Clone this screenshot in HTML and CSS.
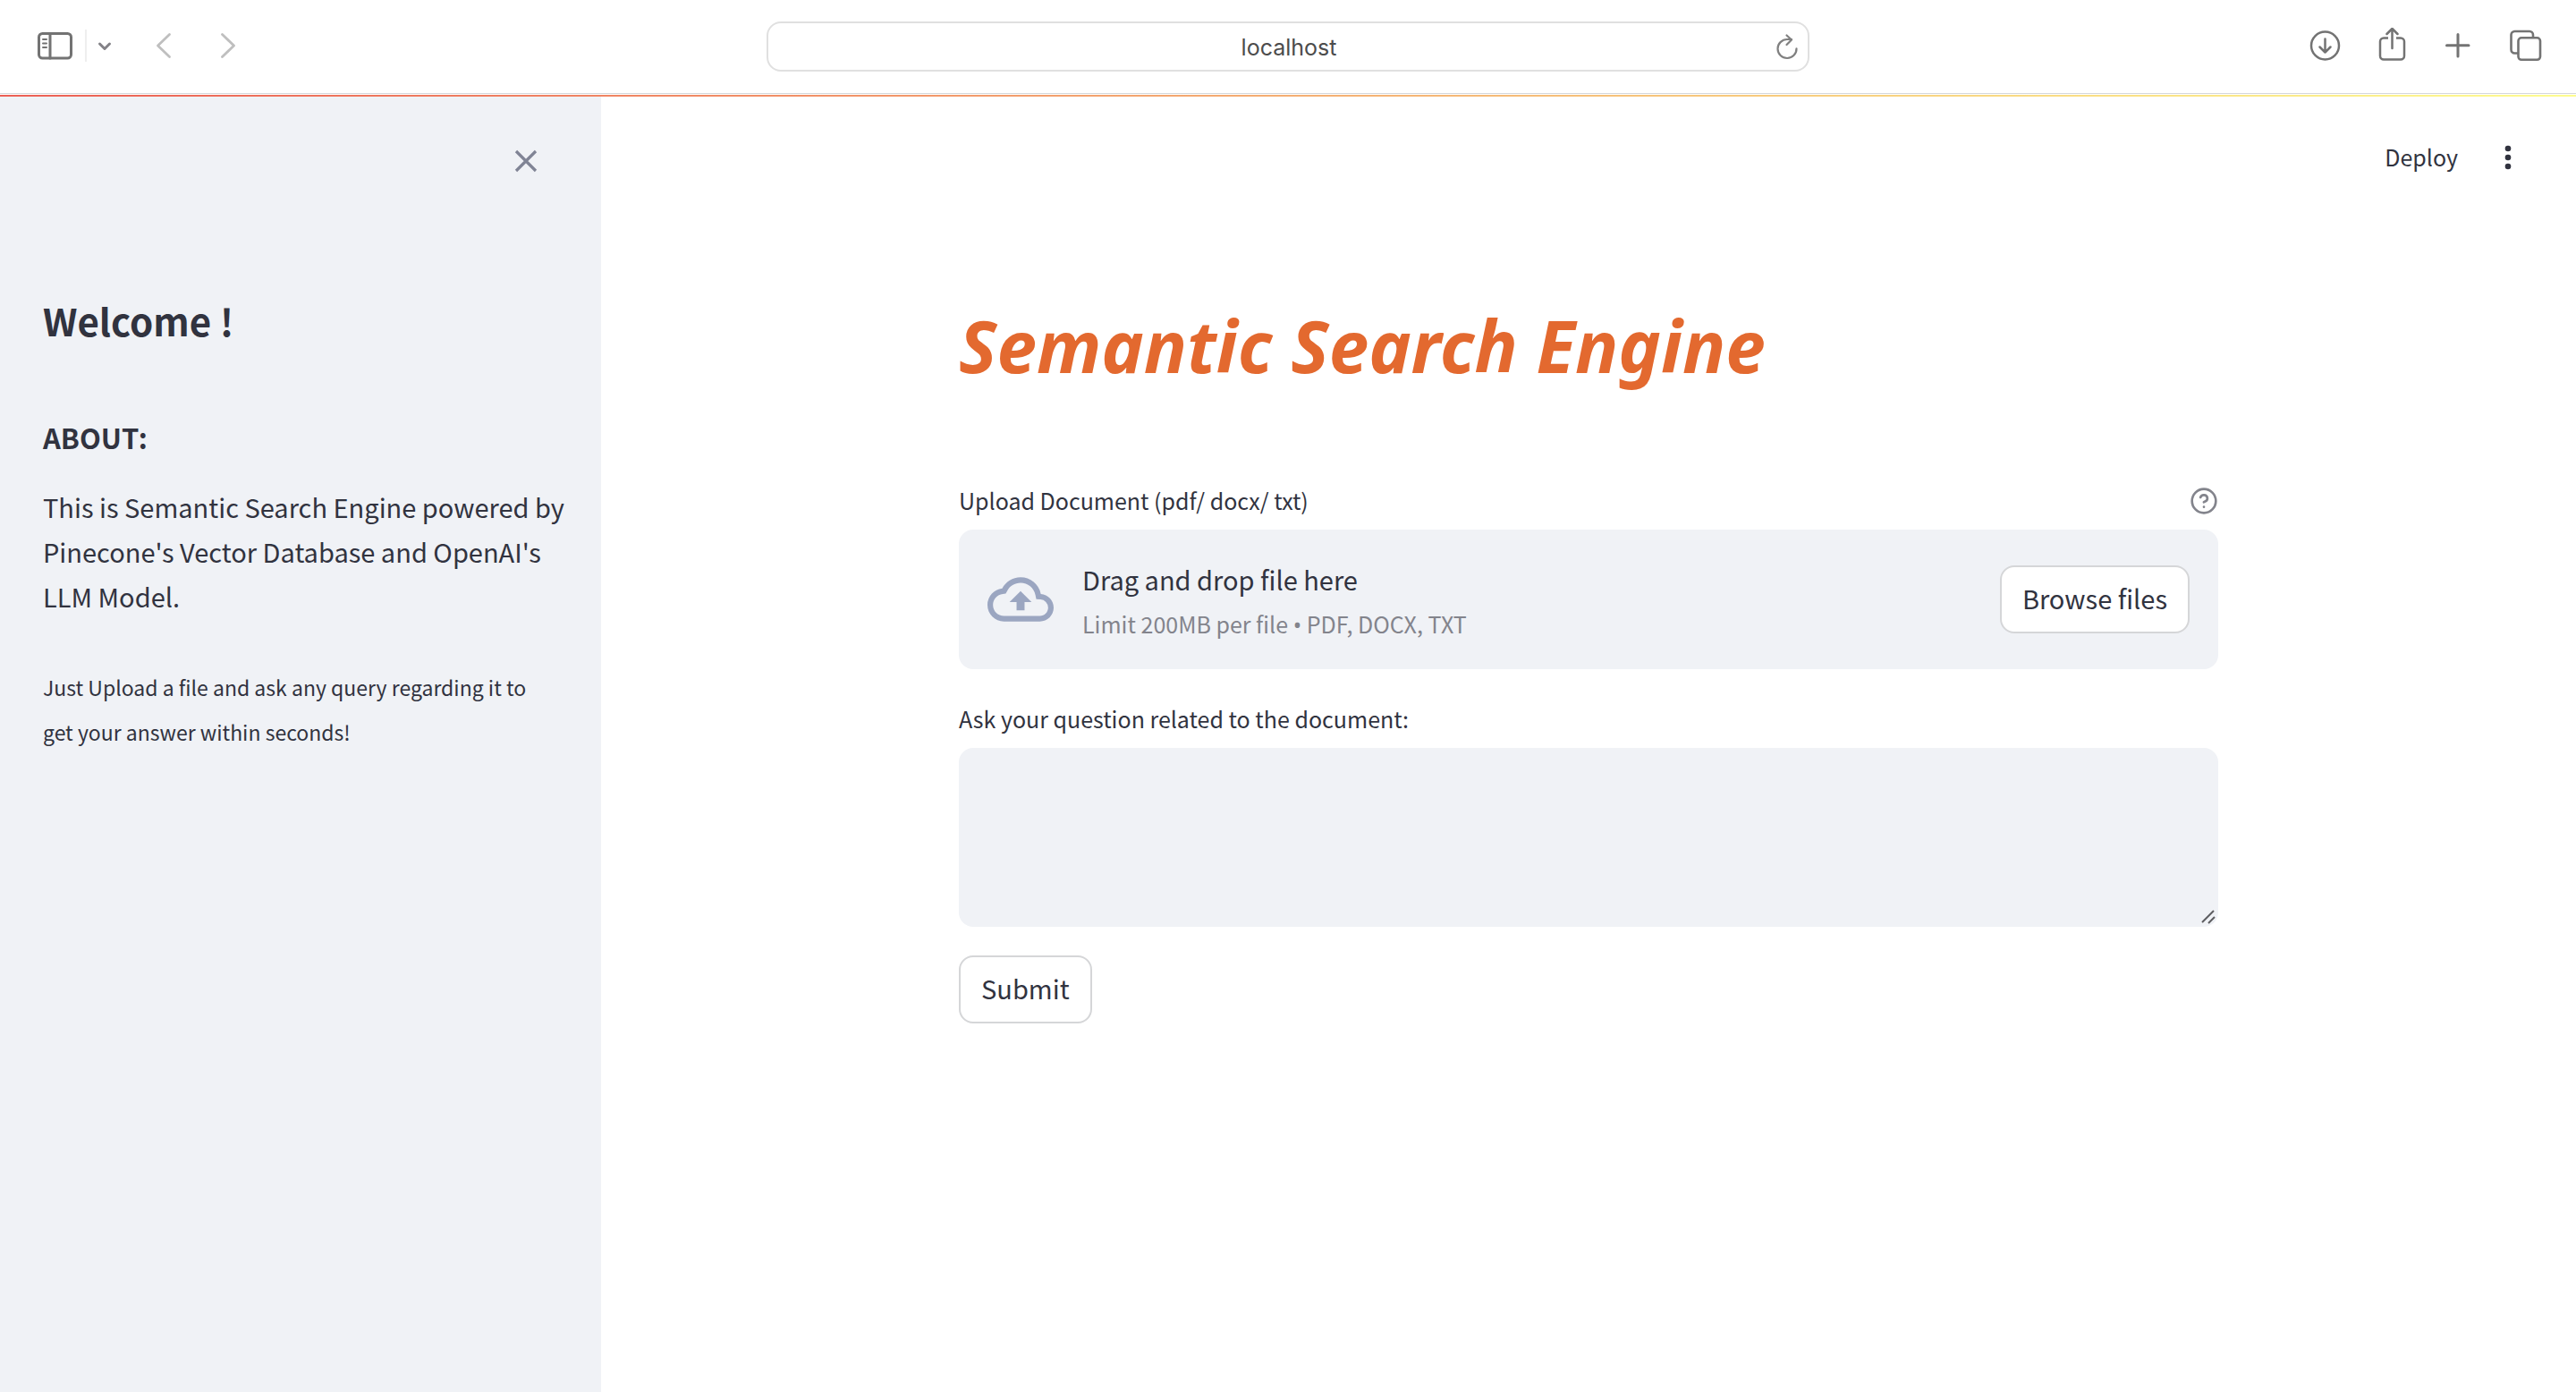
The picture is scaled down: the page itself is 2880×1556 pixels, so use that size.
FILE: index.html
```html
<!DOCTYPE html>
<html lang="en">
<head>
<meta charset="utf-8">
<meta name="viewport" content="width=device-width, initial-scale=1">
<title>Semantic Search Engine</title>
<link rel="stylesheet" href="styles.css">
</head>
<body>
<div class="browser-bar">
  <div class="bar-group bar-left">
    <button class="icon-button" type="button" aria-label="Show sidebar">
      <svg width="42" height="36" viewBox="0 0 42 36" fill="none" stroke="#737373" stroke-width="3" stroke-linecap="round"><rect x="2.5" y="4.500" width="36" height="27.500" rx="4"/><path d="M15 5v27"/><path d="M7 11h4M7 15.500h4M7 20h4" stroke-width="2"/></svg>
    </button>
    <span class="bar-divider"></span>
    <button class="icon-button" type="button" aria-label="Tab groups">
      <svg width="16" height="12" viewBox="0 0 16 12" fill="none" stroke="#838287" stroke-width="3" stroke-linecap="round" stroke-linejoin="round"><path d="M2.500 4 8 9.500 13.500 4"/></svg>
    </button>
    <button class="icon-button nav-back" type="button" aria-label="Back">
      <svg width="20" height="32" viewBox="0 0 20 32" fill="none" stroke="#bfbfbf" stroke-width="2.800" stroke-linecap="round" stroke-linejoin="round"><path d="M16.500 3.500 3.500 16l13 12.500"/></svg>
    </button>
    <button class="icon-button nav-forward" type="button" aria-label="Forward">
      <svg width="20" height="32" viewBox="0 0 20 32" fill="none" stroke="#bfbfbf" stroke-width="2.800" stroke-linecap="round" stroke-linejoin="round"><path d="M3.500 3.500 16.500 16l-13 12.500"/></svg>
    </button>
  </div>
  <div class="address">
    <input class="address-input" type="text" value="localhost" aria-label="Address">
    <button class="icon-button address-reload" type="button" aria-label="Reload">
      <svg width="26" height="32" viewBox="0 0 26 32" fill="none" stroke="#808080" stroke-width="2.200" stroke-linecap="round" stroke-linejoin="round"><path d="M23.500 18.300A10.500 10.500 0 1 1 13 8h5"/><path d="m12.500 3.500 5.500 5-5.500 5.500"/></svg>
    </button>
  </div>
  <div class="bar-group bar-right">
    <button class="icon-button" type="button" aria-label="Downloads">
      <svg width="40" height="40" viewBox="0 0 40 40" fill="none" stroke="#737373" stroke-width="2.500" stroke-linecap="round" stroke-linejoin="round"><circle cx="20.500" cy="20" r="15.500"/><path d="M20.500 12.500v15M14.500 21.500l6 6 6-6"/></svg>
    </button>
    <button class="icon-button" type="button" aria-label="Share">
      <svg width="40" height="40" viewBox="0 0 40 40" fill="none" stroke="#737373" stroke-width="2.500" stroke-linecap="round" stroke-linejoin="round"><path d="M16 11.500h-5a4 4 0 0 0-4 4V31.500a4 4 0 0 0 4 4h19a4 4 0 0 0 4-4V15.500a4 4 0 0 0-4-4h-5" stroke-linecap="butt"/><path d="M20.500 23V1.500M14.500 7l6-6 6 6"/></svg>
    </button>
    <button class="icon-button" type="button" aria-label="New tab">
      <svg width="40" height="40" viewBox="0 0 40 40" fill="none" stroke="#737373" stroke-width="3" stroke-linecap="round"><path d="M19 7.500v24.500M6.500 19.700h24.500"/></svg>
    </button>
    <button class="icon-button" type="button" aria-label="Tab overview">
      <svg width="40" height="40" viewBox="0 0 40 40" fill="none" stroke="#737373" stroke-width="2.600"><rect x="11.500" y="11.300" width="24.500" height="24.500" rx="3.500"/><path d="M11.500 28.500H7.500a4 4 0 0 1-4-4V8a4 4 0 0 1 4-4h16.500a4 4 0 0 1 4 4v3.500"/></svg>
    </button>
  </div>
</div>

<div class="app">
  <aside class="sidebar">
    <div class="sidebar-top">
      <button class="icon-button" type="button" aria-label="Close sidebar">
        <svg width="32" height="32" viewBox="0 0 32 32" fill="none" stroke="#808495" stroke-width="3.200"><path d="m5 5 22 22M27 5 5 27"/></svg>
      </button>
    </div>
    <h2 class="sidebar-title">Welcome !</h2>
    <h3 class="sidebar-heading">ABOUT:</h3>
    <p class="sidebar-text">This is Semantic Search Engine powered by Pinecone's Vector Database and OpenAI's LLM Model.</p>
    <p class="sidebar-note">Just Upload a file and ask any query regarding it to get your answer within seconds!</p>
  </aside>

  <main class="main">
    <header class="app-header">
      <button class="deploy" type="button">Deploy</button>
      <button class="icon-button" type="button" aria-label="Main menu">
        <svg width="32" height="32" viewBox="0 0 32 32" fill="#31333f"><circle cx="16" cy="6" r="3.300"/><circle cx="16" cy="16" r="3.300"/><circle cx="16" cy="26" r="3.300"/></svg>
      </button>
    </header>

    <form class="content">
      <h1 class="title">Semantic Search Engine</h1>

      <div class="field-label">
        <label for="browse">Upload Document (pdf/ docx/ txt)</label>
        <button class="icon-button" type="button" aria-label="Help">
          <svg width="32" height="34" viewBox="0 -1.500 24 25.500" fill="none" stroke="#83848c" stroke-width="2" stroke-linecap="round" stroke-linejoin="round"><circle cx="12" cy="12" r="10"/><path d="M9.090 9a3 3 0 0 1 5.830 1c0 2-3 3-3 3"/><path d="M12 17h.01"/></svg>
        </button>
      </div>
      <div class="dropzone">
        <svg class="dropzone-icon" width="74" height="74" viewBox="0 0 24 24" fill="#9ba6c1"><path d="M19.350 10.040A7.490 7.490 0 0 0 12 4C9.110 4 6.600 5.640 5.350 8.040A5.994 5.994 0 0 0 0 14c0 3.310 2.690 6 6 6h13c2.760 0 5-2.240 5-5 0-2.640-2.050-4.780-4.650-4.960zM19 18H6c-2.210 0-4-1.790-4-4 0-2.050 1.530-3.760 3.560-3.970l1.070-.11.5-.95C8.080 7.140 9.940 6 12 6c2.620 0 4.880 1.860 5.390 4.430l.3 1.500 1.530.11A2.980 2.980 0 0 1 22 15c0 1.650-1.350 3-3 3zM8 13h2.550v3h2.900v-3H16l-4-4z"/></svg>
        <div class="dropzone-text">
          <div class="dropzone-title">Drag and drop file here</div>
          <div class="dropzone-limit">Limit 200MB per file <span class="bullet">•</span> PDF, DOCX, TXT</div>
        </div>
        <button class="button" id="browse" type="button">Browse files</button>
      </div>

      <div class="field-label question-label">
        <label for="question">Ask your question related to the document:</label>
      </div>
      <div class="question">
        <textarea class="question-input" id="question"></textarea>
        <svg class="question-grip" width="16" height="16" viewBox="0 0 16 16" fill="none" stroke="#5e5e62" stroke-width="2"><path d="M1 14 14 1M8 15l7-7"/></svg>
      </div>

      <button class="button submit" type="submit">Submit</button>
    </form>
  </main>
</div>
</body>
</html>
```
FILE: styles.css
```css
:root {
  --text: #31333f;
  --muted: #83848c;
  --surface: #f0f2f6;
  --border: #d5d6d8;
  --accent: #e3692f;
}

* {
  box-sizing: border-box;
}

body {
  display: flex;
  flex-direction: column;
  min-height: 100vh;
  margin: 0;
  background: #fff;
  color: var(--text);
  font: 29px/50px "Noto Sans CJK SC", "Noto Sans", sans-serif;
}

h1, h2, h3, p {
  margin: 0;
}

button, input, textarea {
  font: inherit;
  color: inherit;
}

svg {
  display: block;
}

.icon-button {
  flex: none;
  padding: 0;
  border: 0;
  background: none;
}

/* Browser toolbar */
.browser-bar {
  display: grid;
  grid-template-columns: 1fr minmax(0, 1166px) 1fr;
  align-items: center;
  height: 105px;
  border-bottom: 1px solid #d5d7da;
}

.bar-group {
  display: flex;
  align-items: center;
  padding-bottom: 2px;
}

.bar-left {
  gap: 12px;
  padding-left: 41px;
}

.bar-divider {
  width: 2px;
  height: 36px;
  background: #eee;
}

.nav-back {
  margin-left: 36px;
}

.nav-forward {
  margin-left: 40px;
}

.bar-right {
  justify-content: flex-end;
  gap: 35px;
  padding-right: 36px;
}

.address {
  position: relative;
}

.address-input {
  display: block;
  width: 100%;
  height: 56px;
  padding: 2px 46px 0 48px;
  border: 2px solid #e0e0e0;
  border-radius: 16px;
  background: #fff;
  color: #4c4c4c;
  font: 25px/32px Inter, sans-serif;
  text-align: center;
}

.address-reload {
  position: absolute;
  top: 12px;
  right: 12px;
}

/* App shell */
.app {
  display: flex;
  flex: 1;
  margin-top: 1px;
  position: relative;
}

.app::before {
  content: "";
  position: absolute;
  inset: 0 0 auto;
  height: 2px;
  background: linear-gradient(90deg, #ec6055, #fdfc90);
}

.sidebar {
  flex: 0 0 672px;
  padding: 0 32px 0 48px;
  background: var(--surface);
}

.sidebar-top {
  display: flex;
  justify-content: flex-end;
  padding: 58px 36px 136px 0;
}

.sidebar-title {
  margin-bottom: 85px;
  font-size: 42px;
  line-height: 52px;
  font-weight: 600;
}

.sidebar-heading {
  margin-bottom: 32px;
  font-size: 31px;
  line-height: 40px;
  font-weight: 600;
}

.sidebar-text {
  margin-bottom: 52px;
}

.sidebar-note {
  padding-right: 16px;
  font-size: 23px;
}

/* Main column */
.main {
  flex: 1;
  min-width: 0;
}

.app-header {
  display: flex;
  align-items: center;
  justify-content: flex-end;
  gap: 40px;
  height: 140px;
  padding-right: 60px;
}

.deploy {
  padding: 0 0 2px;
  border: 0;
  background: none;
  font-size: 25px;
}

.content {
  display: flex;
  flex-direction: column;
  max-width: 1408px;
  margin: 0 auto;
  padding-top: 92px;
}

.title {
  margin-bottom: 102px;
  color: var(--accent);
  font-family: "Noto Sans", sans-serif;
  font-size: 80px;
  line-height: 96px;
  font-style: italic;
  font-weight: 700;
}

.field-label {
  display: flex;
  align-items: center;
  justify-content: space-between;
  margin-bottom: 10px;
  font-size: 25px;
  line-height: 46px;
}

.dropzone {
  display: flex;
  align-items: center;
  padding: 26px 32px;
  border-radius: 16px;
  background: var(--surface);
}

.dropzone-icon {
  flex: none;
  margin-right: 32px;
}

.dropzone-text {
  flex: 1;
  padding-top: 4px;
}

.dropzone-limit {
  color: var(--muted);
  font-size: 25px;
}

.bullet {
  font-family: "Noto Sans", sans-serif;
  line-height: 1;
}

.button {
  height: 76px;
  padding: 0 23px 4px;
  border: 2px solid var(--border);
  border-radius: 16px;
  background: #fff;
}

.question-label {
  margin-top: 32px;
}

.question {
  position: relative;
}

.question-input {
  display: block;
  width: 100%;
  height: 200px;
  padding: 24px;
  border: 0;
  border-radius: 16px;
  background: var(--surface);
  resize: vertical;
}

.question-input::-webkit-resizer {
  display: none;
}

.question-grip {
  position: absolute;
  right: 3px;
  bottom: 3px;
  pointer-events: none;
}

.submit {
  align-self: flex-start;
  margin-top: 32px;
}
```
